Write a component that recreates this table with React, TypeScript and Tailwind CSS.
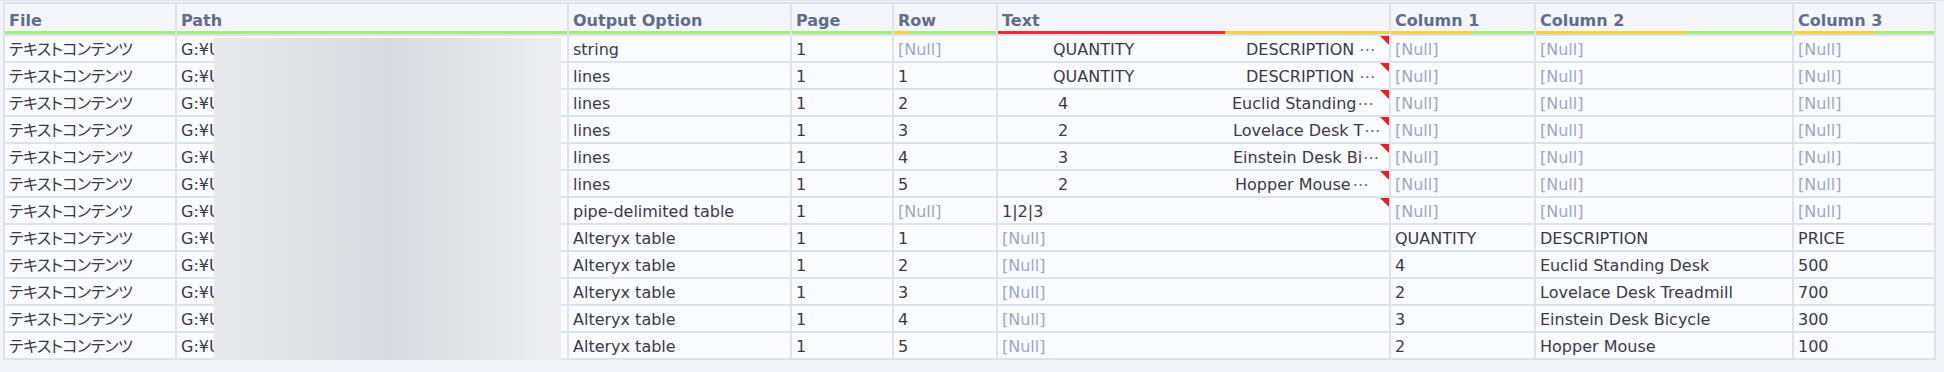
const cols = [
  { label: 'File', bar: [['bg-[#a2ee7d]', 'flex-1']] },
  { label: 'Path', bar: [['bg-[#a2ee7d]', 'flex-1']] },
  { label: 'Output Option', bar: [['bg-[#a2ee7d]', 'flex-1']] },
  { label: 'Page', bar: [['bg-[#a2ee7d]', 'flex-1']] },
  { label: 'Row', bar: [['bg-[#f6d23c]', 'w-[15px]'], ['bg-[#a2ee7d]', 'flex-1']] },
  { label: 'Text', bar: [['bg-[#ee2a38]', 'w-[227px]'], ['bg-[#f6d23c]', 'flex-1']] },
  { label: 'Column 1', bar: [['bg-[#f6d23c]', 'w-[82px]'], ['bg-[#a2ee7d]', 'flex-1']] },
  { label: 'Column 2', bar: [['bg-[#f6d23c]', 'w-[149px]'], ['bg-[#a2ee7d]', 'flex-1']] },
  { label: 'Column 3', bar: [['bg-[#f6d23c]', 'w-[81px]'], ['bg-[#a2ee7d]', 'flex-1']] },
];

type Line = { a: string; aCls: string; b: string; eCls: string };

type Rec = {
  opt: string;
  row: string | null;
  text: Line | string | null;
  flag?: boolean;
  c1: string | null;
  c2: string | null;
  c3: string | null;
};

const rows: Rec[] = [
  { opt: 'string', row: null, text: { a: 'QUANTITY', aCls: 'pl-[55px] w-[248px]', b: 'DESCRIPTION', eCls: 'ml-[5px]' }, flag: true, c1: null, c2: null, c3: null },
  { opt: 'lines', row: '1', text: { a: 'QUANTITY', aCls: 'pl-[55px] w-[248px]', b: 'DESCRIPTION', eCls: 'ml-[5px]' }, flag: true, c1: null, c2: null, c3: null },
  { opt: 'lines', row: '2', text: { a: '4', aCls: 'pl-[60px] w-[234px]', b: 'Euclid Standing', eCls: 'ml-[1px]' }, flag: true, c1: null, c2: null, c3: null },
  { opt: 'lines', row: '3', text: { a: '2', aCls: 'pl-[60px] w-[235px]', b: 'Lovelace Desk T', eCls: 'ml-[1px]' }, flag: true, c1: null, c2: null, c3: null },
  { opt: 'lines', row: '4', text: { a: '3', aCls: 'pl-[60px] w-[235px]', b: 'Einstein Desk Bi', eCls: 'ml-[1px]' }, flag: true, c1: null, c2: null, c3: null },
  { opt: 'lines', row: '5', text: { a: '2', aCls: 'pl-[60px] w-[237px]', b: 'Hopper Mouse', eCls: 'ml-[2px]' }, flag: true, c1: null, c2: null, c3: null },
  { opt: 'pipe-delimited table', row: null, text: '1|2|3', flag: true, c1: null, c2: null, c3: null },
  { opt: 'Alteryx table', row: '1', text: null, c1: 'QUANTITY', c2: 'DESCRIPTION', c3: 'PRICE' },
  { opt: 'Alteryx table', row: '2', text: null, c1: '4', c2: 'Euclid Standing Desk', c3: '500' },
  { opt: 'Alteryx table', row: '3', text: null, c1: '2', c2: 'Lovelace Desk Treadmill', c3: '700' },
  { opt: 'Alteryx table', row: '4', text: null, c1: '3', c2: 'Einstein Desk Bicycle', c3: '300' },
  { opt: 'Alteryx table', row: '5', text: null, c1: '2', c2: 'Hopper Mouse', c3: '100' },
];

function Cell({ value }: { value: string | null }) {
  return (
    <div className="flex h-[25px] items-center overflow-hidden whitespace-nowrap bg-[#fafbfe] px-[4px] pt-[2px]">
      {value === null ? <span className="text-[#9ea8c2]">[Null]</span> : value}
    </div>
  );
}

function TextCell({ text, flag }: { text: Line | string | null; flag?: boolean }) {
  return (
    <div className="relative flex h-[25px] items-center overflow-hidden whitespace-nowrap bg-[#fafbfe] pt-[2px]">
      {text === null && <span className="pl-[4px] text-[#9ea8c2]">[Null]</span>}
      {typeof text === 'string' && <span className="pl-[4px]">{text}</span>}
      {text !== null && typeof text === 'object' && (
        <>
          <span className={`shrink-0 ${text.aCls}`}>{text.a}</span>
          <span className="shrink-0">{text.b}</span>
          <span className={`shrink-0 text-[#6b6b78] ${text.eCls}`}>⋯</span>
        </>
      )}
      {flag && (
        <span className="absolute right-0 top-0 h-0 w-0 border-l-[9px] border-t-[9px] border-l-transparent border-t-[#ec1c24]" />
      )}
    </div>
  );
}

export default function App() {
  return (
    <div className="relative h-[372px] w-[1944px] overflow-hidden border-t border-[#e3e7ef] bg-[#f3f5fa] font-['DejaVu_Sans','Noto_Sans_CJK_JP',sans-serif] text-[16px] leading-[19px] text-[#3a3a4a]">
      <div className="ml-[3px] mt-[1px] grid w-fit grid-cols-[170px_390px_221px_100px_102px_391px_143px_256px_140px] gap-[2px] bg-[#dde2ec] p-[2px]">
        {cols.map((c) => (
          <div key={c.label} className="flex h-[30px] flex-col bg-[#f4f6fb]">
            <div className="flex flex-1 items-end px-[4px] pb-[1px] font-bold text-[#5f6d8e]">{c.label}</div>
            <div className="flex h-[3px]">
              {c.bar.map(([color, w], i) => (
                <div key={i} className={`${color} ${w}`} />
              ))}
            </div>
          </div>
        ))}
        {rows.map((r, i) => (
          <div key={i} className="contents">
            <div className="flex h-[25px] items-center whitespace-nowrap bg-[#fafbfe] px-[4px] pt-[2px] tracking-[-0.6px] [font-feature-settings:'palt']">
              テキストコンテンツ
            </div>
            <Cell value="G:¥Users¥data¥samples¥invoice.pdf" />
            <Cell value={r.opt} />
            <Cell value="1" />
            <Cell value={r.row} />
            <TextCell text={r.text} flag={r.flag} />
            <Cell value={r.c1} />
            <Cell value={r.c2} />
            <Cell value={r.c3} />
          </div>
        ))}
      </div>
      <div className="absolute left-[214px] top-[37px] h-[322px] w-[347px] bg-linear-to-r from-[#e8e9ec] via-[#d9dadf] to-[#eceef1]" />
    </div>
  );
}
